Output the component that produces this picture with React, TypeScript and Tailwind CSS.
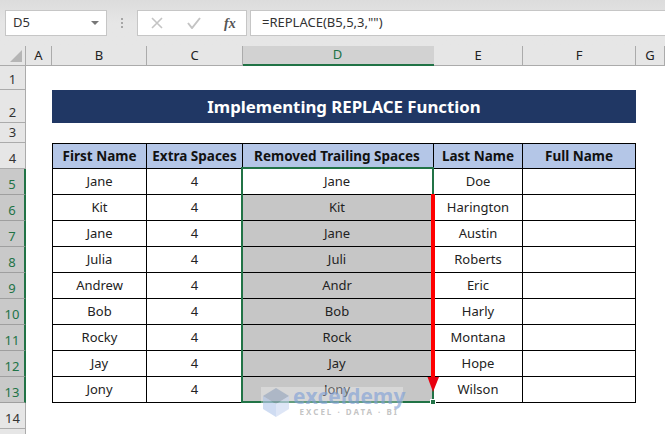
import React from 'react';

const rows = [
    ['Jane', 'Jane', 'Doe'],
    ['Kit', 'Kit', 'Harington'],
    ['Jane', 'Jane', 'Austin'],
    ['Julia', 'Juli', 'Roberts'],
    ['Andrew', 'Andr', 'Eric'],
    ['Bob', 'Bob', 'Harly'],
    ['Rocky', 'Rock', 'Montana'],
    ['Jay', 'Jay', 'Hope'],
    ['Jony', 'Jony', 'Wilson'],
];

const colHead = 'flex items-center justify-center bg-[#e6e6e6] border-r border-[#ababab] border-b text-[13px] text-[#222]';
const rowHead = 'flex items-end justify-center bg-[#e6e6e6] border-b border-[#ababab] border-r text-[13px] text-[#333]';
const rowHeadSel = 'flex items-end justify-center bg-[#c9c9c9] border-b border-[#9f9f9f] border-r-2 border-r-[#217346] text-[13px] text-[#217346]';
const th = 'flex items-center justify-center bg-[#b4c6e7] border-t border-b border-r border-black text-[13.5px] font-bold text-[#111]';
const td = 'flex items-center justify-center border-b border-r border-black text-[13px] text-[#222]';

const App: React.FC = () => {
    return (
        <div className="w-[665px] h-[434px] overflow-hidden bg-white flex flex-col font-['Noto_Sans',sans-serif]">
            {/* Formula bar */}
            <div className="h-[46px] bg-gradient-to-b from-[#dcdcdc] via-[#e6e6e6] to-[#e6e6e6] pt-[10px] flex items-start shrink-0">
                <div className="ml-[5px] w-[102px] h-[26px] bg-white border border-[#c6c6c6] flex items-center justify-between pl-[7px] pr-[7px] text-[13px] text-[#333]">
                    D5
                    <span className="w-0 h-0 border-l-[4px] border-r-[4px] border-t-[4px] border-l-transparent border-r-transparent border-t-[#777]" />
                </div>
                <div className="w-[30px] h-[26px] flex flex-col items-center justify-center gap-[2px]">
                    <span className="w-[2px] h-[2px] bg-[#a6a6a6]" />
                    <span className="w-[2px] h-[2px] bg-[#a6a6a6]" />
                    <span className="w-[2px] h-[2px] bg-[#a6a6a6]" />
                </div>
                <div className="w-[110px] h-[26px] bg-white border border-[#c6c6c6] flex items-center">
                    <svg className="ml-[13px]" width="12" height="12" viewBox="0 0 12 12" fill="none" stroke="#c4c4c4" strokeWidth="1.6"><path d="M1 1l10 10M11 1L1 11" /></svg>
                    <svg className="ml-[24px]" width="15" height="12" viewBox="0 0 15 12" fill="none" stroke="#c4c4c4" strokeWidth="2"><path d="M1 6l4 5 8-10" /></svg>
                    <span className="ml-[22px] text-[14px] italic font-bold text-[#555] font-['Liberation_Serif',serif]">fx</span>
                </div>
                <div className="ml-[3px] flex-1 h-[26px] bg-white border-t border-b border-l border-[#c6c6c6] flex items-center pl-[11px] text-[13px] text-[#333]">
                    =REPLACE(B5,5,3,"")
                </div>
            </div>

            {/* Sheet */}
            <div className="relative grid grid-cols-[26px_26px_95px_96px_191px_89px_113px_29px] grid-rows-[20px_24px_33px_20px_26px_repeat(9,26px)_26px_6px]">
                <div className="bg-[#e6e6e6] border-r border-b border-[#ababab] flex items-end justify-end pr-[3px] pb-[3px]">
                    <span className="w-0 h-0 border-b-[12px] border-l-[12px] border-b-[#b5b5b5] border-l-transparent" />
                </div>
                <div className={colHead}>A</div>
                <div className={colHead}>B</div>
                <div className={colHead}>C</div>
                <div className="flex items-center justify-center pr-[2px] bg-[#d2d2d2] border-b-2 border-[#217346] text-[13px] text-[#217346]">D</div>
                <div className={colHead}>E</div>
                <div className={colHead}>F</div>
                <div className={colHead}>G</div>

                <div className={rowHead}>1</div>
                <div className="col-span-7" />

                <div className={rowHead}>2</div>
                <div />
                <div className="col-span-5 bg-[#203764] flex items-center justify-center text-white text-[16.8px] font-bold">Implementing REPLACE Function</div>
                <div />

                <div className={rowHead}>3</div>
                <div className="col-span-7" />

                <div className={rowHead}>4</div>
                <div />
                <div className={`${th} border-l`}>First Name</div>
                <div className={th}>Extra Spaces</div>
                <div className={`${th} pr-[2px]`}>Removed Trailing Spaces</div>
                <div className={th}>Last Name</div>
                <div className={th}>Full Name</div>
                <div />

                {rows.map((row, i) => (
                    <React.Fragment key={i}>
                        <div className={rowHeadSel}>{i + 5}</div>
                        <div />
                        <div className={`${td} border-l`}>{row[0]}</div>
                        <div className={td}>4</div>
                        <div className={`${td} pr-[2px] ${i > 0 ? 'bg-[#c6c6c6]' : ''}`}>{row[1]}</div>
                        <div className={td}>{row[2]}</div>
                        <div className={td} />
                        <div />
                    </React.Fragment>
                ))}

                <div className={rowHead}>14</div>
                <div className="col-span-7" />
                <div className="bg-[#e6e6e6] border-r border-[#ababab]" />
                <div className="col-span-7" />

                {/* Selection border */}
                <div className="absolute left-[241px] top-[121px] w-[193px] h-[236px] border-2 border-[#217346]" />
                <div className="absolute left-[430px] top-[353px] w-[6px] h-[6px] bg-[#217346] border border-white" />

                {/* Red arrow */}
                <svg className="absolute left-[426px] top-[148px]" width="15" height="200" viewBox="0 0 15 200">
                    <path d="M5 0h4v184h-4z" fill="#ff0000" />
                    <path d="M1.5 183h11.5l-6 15z" fill="#e8000f" />
                </svg>

                {/* Watermark */}
                <div className="absolute left-[261px] top-[341px] w-[142px] h-[32px] bg-white/30 flex items-start">
                    <svg className="shrink-0 ml-[1px]" width="28" height="31" viewBox="0 0 28 31">
                        <path d="M14 1l13 8-13 8L1 9z" fill="#8a9cb8" fillOpacity="0.55" />
                        <path d="M1 9l13 8v13L1 22z" fill="#a8c0e8" fillOpacity="0.55" />
                        <path d="M27 9l-13 8v13l13-8z" fill="#c3d2ee" fillOpacity="0.55" />
                    </svg>
                    <div className="flex flex-col items-center ml-[3px] leading-none">
                        <span className="text-[21px] leading-[22px] font-bold text-[#7f9fd6]/65 font-['Open_Sans',sans-serif] -mt-[2px]">exceldemy</span>
                        <span className="text-[8px] font-bold tracking-[2px] text-[#b5b5b5]/80 mt-[1px]">EXCEL · DATA · BI</span>
                    </div>
                </div>
            </div>
        </div>
    );
};

export default App;
